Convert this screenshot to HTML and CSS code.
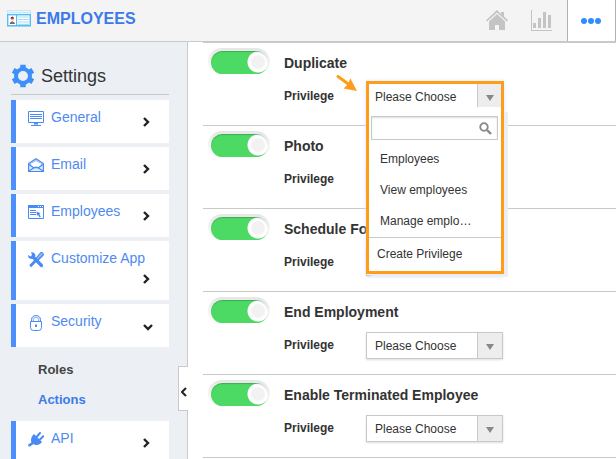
FILE: index.html
```html
<!DOCTYPE html>
<html lang="en">
  <head>
    <meta charset="UTF-8">
    <meta name="viewport" content="width=device-width, initial-scale=1.0">
    <title>Employees</title>
    <link rel="stylesheet" href="styles.css">
  </head>
  <body>
    <header class="topbar">
      <h1 class="brand">
        <svg width="24" height="18" viewBox="0 0 24 18">
          <rect x="0" y="0" width="24" height="17" fill="#c9e6fb"/>
          <path d="M1 1.500h22M1 3.500h22" stroke="#e9f5fe"/>
          <rect x="0.700" y="4.700" width="22.600" height="11" fill="#fff" stroke="#55bdf2" stroke-width="1.400"/>
          <rect x="9" y="5" width="1.200" height="11" fill="#55bdf2"/>
          <path d="M11 7h11M11 9.500h11M11 12h11M11 14.300h11" stroke="#a5dcfa" stroke-width="1.200"/>
          <circle cx="5.300" cy="8.800" r="1.600" fill="#e5a48c"/>
          <path d="M3.600 8.500c0-2.500 3.400-2.500 3.400 0z" fill="#4a2c28"/>
          <path d="M2.700 14c0-3.500 5.200-3.500 5.200 0z" fill="#62667a"/>
          <path d="M5.300 11.500v2.500" stroke="#e04848"/>
        </svg>
        EMPLOYEES
      </h1>
      <nav class="tools">
        <a class="tool" href="#" aria-label="Home">
          <svg width="22" height="21" viewBox="0 0 22 21" fill="#c4c4c4">
            <path d="M11 0L0 10.300l1.100 1.200L11 2.400l9.900 9.100 1.100-1.200-4-3.700V2h-3v2z"/>
            <path d="M11 4L3 11.400V20h6v-5h4v5h6v-8.600z"/>
          </svg>
        </a>
        <a class="tool" href="#" aria-label="Reports">
          <svg width="22" height="21" viewBox="0 0 22 21" fill="#c4c4c4">
            <path d="M0 0h1v20h20v1H0zM2 13h3v5H2zM7 8h3v10H7zM12 2h3v16h-3zM17 5h3v13h-3z"/>
          </svg>
        </a>
        <a class="tool tool-active" href="#" aria-label="More">
          <svg width="20" height="6" viewBox="0 0 20 6" fill="#2f8dfd">
            <circle cx="3" cy="3" r="3"/><circle cx="10" cy="3" r="3"/><circle cx="17" cy="3" r="3"/>
          </svg>
        </a>
      </nav>
    </header>

    <div class="layout">
      <aside class="sidebar">
        <h2 class="sidebar-title">
          <svg width="24" height="24" viewBox="0 0 24 24" fill="none" stroke="#3d8ffb">
            <circle cx="12" cy="12" r="7" stroke-width="4"/>
            <path d="M12 .7v3.500M12 19.800v3.500M2.200 6.400l3 1.700M18.800 15.900l3 1.700M2.200 17.600l3-1.700M18.800 8.100l3-1.700" stroke-width="5.500"/>
          </svg>
          Settings
        </h2>

        <nav class="menu">
          <a class="card" href="#">
            <svg class="card-icon" viewBox="0 0 16 16" fill="none" stroke="#4a8af4">
              <path d="M.5.500h15v11H.5z"/><path d="M2 3.500h12M2 5.500h12M2 7.500h12"/><path d="M6 12.500h4" stroke-width="2"/><path d="M3 14.500h10"/>
            </svg>
            <span>General</span>
            <svg class="chevron" viewBox="0 0 8 26"><path d="M2 9l4 4-4 4"/></svg>
          </a>
          <a class="card" href="#">
            <svg class="card-icon" viewBox="0 0 16 16" fill="#e3edfd" stroke="#4a8af4">
              <path d="M.6 5.500L8 .8l7.400 4.700v8H.6z" stroke-width="1.200"/><path d="M2.500 7.500v-2L8 2.500l5.500 3v2L10 10H6z" fill="#fff" stroke="#8fb6f8"/>
              <path d="M1 6.500L6 10M15 6.500L10 10M1 13l5-3.300c1.200-.8 2.800-.8 4 0L15 13" fill="none" stroke-width="1.200"/>
            </svg>
            <span>Email</span>
            <svg class="chevron" viewBox="0 0 8 26"><path d="M2 9l4 4-4 4"/></svg>
          </a>
          <a class="card" href="#">
            <svg class="card-icon" viewBox="0 0 16 16" fill="none" stroke="#4a8af4">
              <path d="M.5.500h15v13H.5z"/><path d="M0 1.500h16" stroke-width="3"/><path d="M10 1.500h1M12 1.500h1M14 1.500h1" stroke="#fff"/><path d="M2 5.500h6M2 7.500h6M2 9.500h6"/>
              <path d="M8.500 6.500l4 1.800-1.200.8 1.500 2.700-1.200.6-1.500-2.500-1.200.8z" fill="#4a8af4" stroke="none"/>
            </svg>
            <span>Employees</span>
            <svg class="chevron" viewBox="0 0 8 26"><path d="M2 9l4 4-4 4"/></svg>
          </a>
          <a class="card" href="#">
            <svg class="card-icon" viewBox="0 0 16 16" fill="none" stroke="#4a8af4">
              <path d="M5 5l8.500 8.500" stroke-width="3.200" stroke-linecap="round"/>
              <path d="M0 3l2.500 1.500L4 3 3 .2C6-.2 8 2 7.200 4.500L5 7C2.500 7.500-.3 6 0 3z" fill="#4a8af4" stroke="none"/>
              <path d="M2.200 14.200L7.500 8.800" stroke-width="2.800"/>
              <path d="M8 6.500L12.800.8c1-.8 3.200 1 2.400 2.200L9.800 8.500z" fill="#a9c8fb" stroke-width="1.200"/>
              <path d="M10 7l4-4.500" stroke-width=".7"/>
            </svg>
            <span>Customize App</span>
            <svg class="chevron" viewBox="0 0 8 26"><path d="M2 9l4 4-4 4"/></svg>
          </a>
          <a class="card" href="#">
            <svg class="card-icon" viewBox="0 0 16 16" fill="none" stroke="#4a8af4">
              <path d="M3.500 7V4.500a4.500 4 0 0 1 9 0V7" fill="#dce8fd"/><path d="M5.500 6.500v-2a2.500 2 0 0 1 5 0v2" fill="#fff" stroke="#8fb6f8"/><path d="M2.500 6.500h11v6q0 3-3 3h-5q-3 0-3-3z" fill="#fff"/><path d="M8 9.500v2.500" stroke-width="2"/>
            </svg>
            <span>Security</span>
            <svg class="chevron chevron-down" viewBox="0 0 10 26"><path d="M1 12l4 4 4-4"/></svg>
          </a>
          <ul class="submenu">
            <li><a href="#">Roles</a></li>
            <li><a class="current" href="#">Actions</a></li>
          </ul>
          <a class="card" href="#">
            <svg class="card-icon" viewBox="0 0 16 16" fill="none" stroke="#4a8af4">
              <path d="M6 2l8 8c-2 3-6 3.800-8.500 2.200L3.200 10C2.500 7 3.500 4 6 2z" fill="#4a8af4" stroke="none"/>
              <path d="M9 4.500L12 1M12 7.500L15.300 4.300" stroke-width="2" stroke-linecap="round"/><path d="M5 10.500c-1.500 2-2.500 1.500-4.500 3.500" stroke-width="2.400"/>
            </svg>
            <span>API</span>
            <svg class="chevron" viewBox="0 0 8 26"><path d="M2 9l4 4-4 4"/></svg>
          </a>
        </nav>

        <button class="collapse" type="button" aria-label="Collapse menu">
          <svg width="6" height="10" viewBox="0 0 6 10"><path d="M5 1L1 5l4 4" fill="none" stroke="#222" stroke-width="2"/></svg>
        </button>
      </aside>

      <main class="actions">
        <section class="action">
          <input class="toggle" type="checkbox" id="duplicate" aria-label="Duplicate" checked>
          <div class="action-body">
            <h3><label for="duplicate">Duplicate</label></h3>
            <div class="field">
              <label for="privilege1">Privilege</label>
              <div class="picker picker-open">
                <svg class="pointer" width="22" height="18" viewBox="0 0 22 18">
                  <path d="M2 2.500L13 10.500" stroke="#ff9c1a" stroke-width="3" stroke-linecap="round"/>
                  <path d="M21 17L7.500 14.500l4.500-4.200L14.300 4.200z" fill="#ff9c1a"/>
                </svg>
                <div class="popup">
                  <div class="popup-box">
                    <div class="select">
                      <select id="privilege1"><option>Please Choose</option></select>
                    </div>
                    <div class="search">
                      <input type="text" aria-label="Search privileges">
                      <svg width="13" height="13" viewBox="0 0 13 13" fill="none" stroke="#888">
                        <circle cx="5" cy="5" r="3.800" stroke-width="1.800"/><path d="M8 8l4 4" stroke-width="2.400"/>
                      </svg>
                    </div>
                    <ul class="options">
                      <li>Employees</li>
                      <li>View employees</li>
                      <li>Manage emplo…</li>
                    </ul>
                    <button class="create" type="button">Create Privilege</button>
                  </div>
                </div>
              </div>
            </div>
          </div>
        </section>

        <section class="action">
          <input class="toggle" type="checkbox" id="photo" aria-label="Photo" checked>
          <div class="action-body">
            <h3><label for="photo">Photo</label></h3>
            <div class="field">
              <label for="privilege2">Privilege</label>
              <div class="picker select">
                <select id="privilege2"><option>Please Choose</option></select>
              </div>
            </div>
          </div>
        </section>

        <section class="action">
          <input class="toggle" type="checkbox" id="schedule" aria-label="Schedule" checked>
          <div class="action-body">
            <h3><label for="schedule">Schedule Fo</label></h3>
            <div class="field">
              <label for="privilege3">Privilege</label>
              <div class="picker select">
                <select id="privilege3"><option>Please Choose</option></select>
              </div>
            </div>
          </div>
        </section>

        <section class="action">
          <input class="toggle" type="checkbox" id="end" aria-label="End Employment" checked>
          <div class="action-body">
            <h3><label for="end">End Employment</label></h3>
            <div class="field">
              <label for="privilege4">Privilege</label>
              <div class="picker select">
                <select id="privilege4"><option>Please Choose</option></select>
              </div>
            </div>
          </div>
        </section>

        <section class="action">
          <input class="toggle" type="checkbox" id="terminated" aria-label="Enable Terminated Employee" checked>
          <div class="action-body">
            <h3><label for="terminated">Enable Terminated Employee</label></h3>
            <div class="field">
              <label for="privilege5">Privilege</label>
              <div class="picker select">
                <select id="privilege5"><option>Please Choose</option></select>
              </div>
            </div>
          </div>
        </section>
      </main>
    </div>
  </body>
</html>
```
FILE: styles.css
```css
* {
  box-sizing: border-box;
}

body {
  margin: 0;
  height: 100vh;
  overflow: hidden;
  display: flex;
  flex-direction: column;
  font-family: "Liberation Sans", Arial, sans-serif;
  font-size: 12px;
  color: #333;
  background: #fff;
}

h1, h2, h3, ul {
  margin: 0;
  padding: 0;
}

ul {
  list-style: none;
}

a {
  text-decoration: none;
}

select, input, button {
  font: inherit;
  color: inherit;
}

/* top bar */
.topbar {
  flex: none;
  display: flex;
  justify-content: space-between;
  height: 42px;
  background: #f4f4f4;
  border-bottom: 1px solid #c9c9c9;
}

.brand {
  display: flex;
  align-items: center;
  gap: 5px;
  padding: 0 7px 4px;
  font-size: 16px;
  color: #3b7ae8;
}

.tools {
  display: flex;
}

.tool {
  display: flex;
  align-items: center;
  justify-content: center;
  width: 46px;
}

.tool:first-child {
  margin-right: -1px;
}

.tool-active {
  width: 49px;
  margin-left: 2px;
  padding-right: 2px;
  background: #fff;
  border: solid #b0b0b0;
  border-width: 0 1px;
}

.layout {
  flex: 1;
  min-height: 0;
  display: flex;
}

/* sidebar */
.sidebar {
  position: relative;
  flex: none;
  width: 188px;
  padding: 20px 18px 0 11px;
  background: #ecf0f5;
  border-right: 1px solid #c9c9c9;
}

.sidebar-title {
  display: flex;
  align-items: center;
  gap: 6px;
  height: 33px;
  padding-bottom: 4px;
  margin-bottom: 5px;
  border-bottom: 1px solid #c9c9c9;
  font-size: 18px;
  font-weight: normal;
}

.card {
  display: flex;
  flex-wrap: wrap;
  align-items: flex-start;
  column-gap: 7px;
  margin-bottom: 4px;
  padding: 9px 19px 8px 12px;
  background: #fff;
  border-left: 5px solid #4d8ffb;
  font-size: 14px;
  line-height: 16px;
  color: #4f8af0;
}

.card-icon {
  width: 16px;
  height: 16px;
  margin: 2px 0 -2px;
}

.chevron {
  width: 8px;
  height: 26px;
  margin-left: auto;
  fill: none;
  stroke: #222;
  stroke-width: 2.400;
}

.chevron-down {
  width: 10px;
  margin-right: -3px;
}

.submenu {
  padding: 4px 0 6px 27px;
  font-size: 13px;
  font-weight: bold;
  line-height: 30px;
}

.submenu a {
  color: #444;
}

.submenu .current {
  color: #3b7ae8;
}

.collapse {
  position: absolute;
  top: 324px;
  right: -1px;
  display: flex;
  align-items: center;
  width: 10px;
  height: 45px;
  padding: 6px 0 0 2px;
  background: #fff;
  border: 1px solid #c9c9c9;
  border-right: 0;
}

/* list of actions */
.actions {
  flex: 1;
  margin-left: 15px;
  border-top: 1px solid #c9c9c9;
}

.action {
  display: flex;
  gap: 14px;
  height: 83px;
  padding-left: 5px;
  border-bottom: 1px solid #c9c9c9;
}

.toggle {
  appearance: none;
  flex: none;
  width: 62px;
  height: 28px;
  margin: 5px 0 0;
  padding: 3px 2px 2px 3px;
  border-radius: 14px;
  background: linear-gradient(#e6e6e6, #f6f6f6 60%, #fff);
}

.toggle::before {
  content: "";
  display: block;
  height: 23px;
  border-radius: 12px;
  background:
    radial-gradient(circle at right 10px top 11px, #f2f2f2 6px, #fff 8px, #fff 10px, transparent 11px),
    #4cd964;
  box-shadow: inset 0 1px 1px rgba(0, 0, 0, 0.2);
}

.action-body {
  padding-top: 10px;
}

.action-body h3 {
  font-size: 14px;
  line-height: 20px;
}

.field {
  display: flex;
  align-items: center;
  height: 27px;
  margin-top: 10px;
}

.field label {
  width: 82px;
  padding-bottom: 2px;
  font-weight: bold;
}

.picker {
  width: 137px;
  height: 27px;
}

.select {
  position: relative;
  background: linear-gradient(to left, #ededed 24px, #c9c9c9 24px, #c9c9c9 25px, #fff 25px);
  border: 1px solid #c9c9c9;
  box-shadow: 0 1px 2px #ddd;
}

.select::after {
  content: "";
  position: absolute;
  top: 11px;
  right: 8px;
  border: 4px solid transparent;
  border-top: 6px solid #888;
  border-bottom: 0;
  pointer-events: none;
}

.select select {
  appearance: none;
  width: 100%;
  height: 100%;
  padding: 0 8px;
  border: 0;
  background: none;
}

/* opened dropdown */
.picker-open {
  position: relative;
  z-index: 1;
}

.pointer {
  position: absolute;
  top: -9px;
  left: -30px;
}

.popup {
  position: absolute;
  z-index: 1;
  top: -2px;
  left: 0;
  width: 138px;
}

.popup::before {
  content: "";
  position: absolute;
  z-index: -1;
  inset: 31px -4px -3px 5px;
  background: #f0f0f0;
}

.popup-box {
  background: #fff;
  border: 3px solid #ff9c1a;
  box-shadow: 0 0 4px #d5e8fb;
}

.popup .select {
  height: 23px;
  background: linear-gradient(to left, #ededed 23px, #c9c9c9 23px, #c9c9c9 24px, #fff 24px);
  border: 0;
  box-shadow: none;
}

.popup .select::after {
  right: 7px;
}

.popup .select select {
  padding: 2px 6px 0;
}

.search {
  display: flex;
  align-items: center;
  height: 24px;
  margin: 9px 3px 4px 2px;
  padding-right: 5px;
  border: 1px solid #c9c9c9;
  box-shadow: inset 0 1px 2px #ddd;
}

.search input {
  flex: 1;
  min-width: 0;
  border: 0;
  outline: 0;
  background: none;
}

.options {
  padding-left: 11px;
  line-height: 31px;
}

.create {
  width: 100%;
  height: 34px;
  padding: 0 8px 2px;
  background: none;
  border: 0;
  border-top: 1px solid #c9c9c9;
  text-align: left;
}
```
